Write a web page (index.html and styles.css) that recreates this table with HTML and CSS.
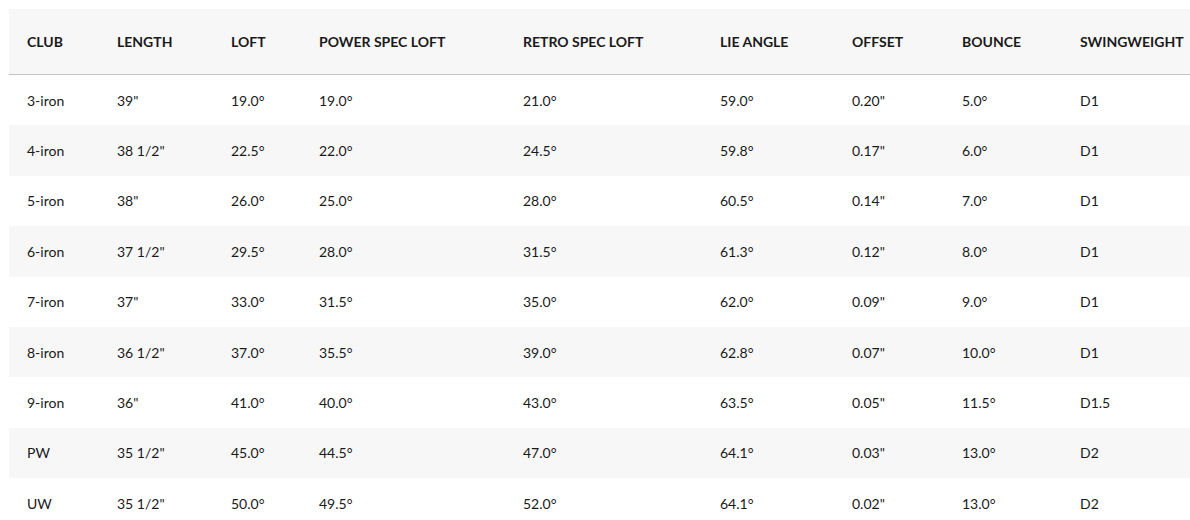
FILE: index.html
```html
<!DOCTYPE html>
<html lang="en">
<head>
<meta charset="utf-8">
<title>Specs</title>
<link rel="stylesheet" href="styles.css">
</head>
<body>
<div class="wrap">
<table class="specs">
<colgroup>
<col class="c1"><col class="c2"><col class="c3"><col class="c4"><col class="c5"><col class="c6"><col class="c7"><col class="c8"><col class="c9">
</colgroup>
<thead>
<tr><th>CLUB</th><th>LENGTH</th><th>LOFT</th><th>POWER SPEC LOFT</th><th>RETRO SPEC LOFT</th><th>LIE ANGLE</th><th>OFFSET</th><th>BOUNCE</th><th>SWINGWEIGHT</th></tr>
</thead>
<tbody>
<tr><td>3-iron</td><td>39"</td><td>19.0°</td><td>19.0°</td><td>21.0°</td><td>59.0°</td><td>0.20"</td><td>5.0°</td><td>D1</td></tr>
<tr><td>4-iron</td><td>38 1/2"</td><td>22.5°</td><td>22.0°</td><td>24.5°</td><td>59.8°</td><td>0.17"</td><td>6.0°</td><td>D1</td></tr>
<tr><td>5-iron</td><td>38"</td><td>26.0°</td><td>25.0°</td><td>28.0°</td><td>60.5°</td><td>0.14"</td><td>7.0°</td><td>D1</td></tr>
<tr><td>6-iron</td><td>37 1/2"</td><td>29.5°</td><td>28.0°</td><td>31.5°</td><td>61.3°</td><td>0.12"</td><td>8.0°</td><td>D1</td></tr>
<tr><td>7-iron</td><td>37"</td><td>33.0°</td><td>31.5°</td><td>35.0°</td><td>62.0°</td><td>0.09"</td><td>9.0°</td><td>D1</td></tr>
<tr><td>8-iron</td><td>36 1/2"</td><td>37.0°</td><td>35.5°</td><td>39.0°</td><td>62.8°</td><td>0.07"</td><td>10.0°</td><td>D1</td></tr>
<tr><td>9-iron</td><td>36"</td><td>41.0°</td><td>40.0°</td><td>43.0°</td><td>63.5°</td><td>0.05"</td><td>11.5°</td><td>D1.5</td></tr>
<tr><td>PW</td><td>35 1/2"</td><td>45.0°</td><td>44.5°</td><td>47.0°</td><td>64.1°</td><td>0.03"</td><td>13.0°</td><td>D2</td></tr>
<tr><td>UW</td><td>35 1/2"</td><td>50.0°</td><td>49.5°</td><td>52.0°</td><td>64.1°</td><td>0.02"</td><td>13.0°</td><td>D2</td></tr>
</tbody>
</table>
</div>
</body>
</html>
```

FILE: styles.css
```css
html, body {
  margin: 0;
  padding: 0;
  background: #ffffff;
  overflow: hidden;
}
.wrap {
  padding: 9px 0 0 9px;
}
.specs {
  border-collapse: collapse;
  table-layout: fixed;
  width: 1200px;
  font-family: "Lato", "Liberation Sans", sans-serif;
  font-size: 14px;
  color: #1a1a1a;
}
.c1 { width: 90px; }
.c2 { width: 114px; }
.c3 { width: 88px; }
.c4 { width: 204px; }
.c5 { width: 197px; }
.c6 { width: 132px; }
.c7 { width: 110px; }
.c8 { width: 118px; }
.c9 { width: 147px; }
.specs th {
  text-align: left;
  font-weight: 700;
  height: 65px;
  padding: 0 0 0 18px;
  background: #f7f7f7;
  border-bottom: 1px solid #c4c4c4;
  white-space: nowrap;
}
.specs td {
  height: 50.4px;
  padding: 0 0 0 18px;
  white-space: nowrap;
}
.specs tbody tr:nth-child(even) td {
  background: #f7f7f7;
}
```
